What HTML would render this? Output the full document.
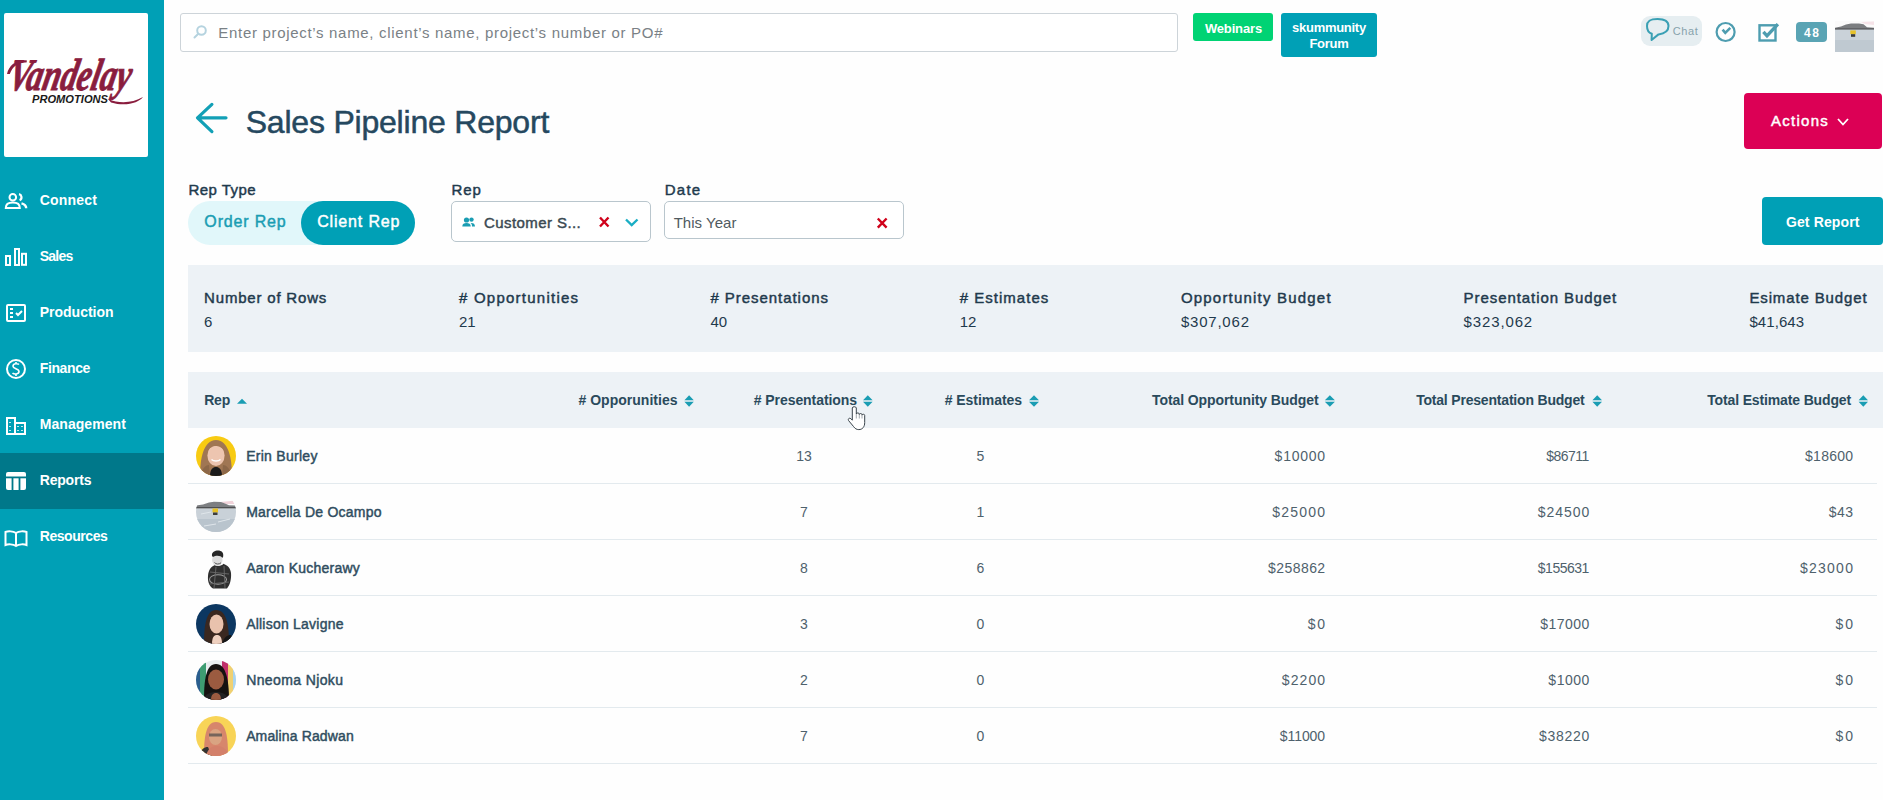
<!DOCTYPE html>
<html><head><meta charset="utf-8"><title>Sales Pipeline Report</title>
<style>
html,body{margin:0;padding:0;width:1883px;height:800px;overflow:hidden;background:#fefefe;font-family:"Liberation Sans", sans-serif;}
.t{position:absolute;white-space:nowrap;}
.a{position:absolute;}
</style></head><body>
<!-- sidebar -->
<div class="a" style="left:0;top:0;width:164px;height:800px;background:#00a0b6;"></div>
<div class="a" style="left:4px;top:13px;width:144px;height:144px;background:#ffffff;border-radius:2px;"></div>
<svg class="a" style="left:4px;top:13px" width="144" height="144" viewBox="0 0 144 144">
  <g transform="skewX(-12)">
  <text x="19" y="77" font-family="Liberation Serif" font-style="italic" font-weight="bold" font-size="45" fill="#8a1d3e" stroke="#8a1d3e" stroke-width="1.0" textLength="122" lengthAdjust="spacingAndGlyphs">Vandelay</text>
  </g>
  <path d="M3 61 C5 52 13 46 23 47.5 L22.5 49.5 C15 49 8.5 53 5.8 61 Z" fill="#8a1d3e"/>
  <path d="M104 86 C116 91 128 90 139 84 C135 89.5 122 94 107 89.5 Z" fill="#8a1d3e"/>
  <text x="28" y="90" font-family="Liberation Sans" font-style="italic" font-weight="bold" font-size="11" fill="#1a1a1a" textLength="76" lengthAdjust="spacingAndGlyphs">PROMOTIONS</text>
</svg>
<div class="a" style="left:0;top:453px;width:164px;height:56px;background:#00788a;"></div>
<!-- nav icons -->
<svg class="a" style="left:0;top:180px" width="40" height="380" viewBox="0 180 40 380" fill="none" stroke="#fff" stroke-width="2">
  <!-- connect -->
  <circle cx="12.8" cy="197.3" r="3.3"/>
  <path d="M5.8 208 C5.8 204 8.5 202.6 12.8 202.6 C17 202.6 19.8 204 19.8 208 Z"/>
  <path d="M19 194.2 C21.8 194.8 22.6 199 19.6 200.2" stroke-width="2.2"/>
  <path d="M21.5 203.3 C25 204.2 26.2 206 26.2 208.2" stroke-width="2.4"/>
  <!-- sales -->
  <rect x="6" y="256" width="4" height="9" />
  <rect x="15" y="249" width="4" height="16" />
  <rect x="22" y="253.8" width="4" height="11" />
  <!-- production -->
  <rect x="7" y="305" width="18" height="16" rx="1"/>
  <path d="M10 309 h3 M10 313 h3 M10 317 h3" />
  <path d="M16 313 l2 2 l4 -4" />
  <!-- finance -->
  <circle cx="16" cy="369" r="9"/>
  <path d="M19 364.5 C18 363.5 13 363 13 366.3 C13 369 19 368.5 19 371.5 C19 374.5 14 374.5 12.5 373 M16 362 v2 M16 374 v2" stroke-width="1.6"/>
  <!-- management -->
  <rect x="7" y="418" width="8" height="16"/>
  <rect x="15" y="423" width="10" height="11"/>
  <path d="M10 422 v1 M10 426 v1 M10 430 v1 M18 426 v1 M22 426 v1 M18 430 v1 M22 430 v1" stroke-width="1.5"/>
  <!-- reports -->
  <rect x="6" y="472" width="20" height="18" rx="2" fill="#fff" stroke="none"/>
  <rect x="6" y="476.5" width="20" height="1.8" fill="#00788a" stroke="none"/>
  <rect x="11.6" y="478" width="1.8" height="12" fill="#00788a" stroke="none"/>
  <rect x="18.6" y="478" width="1.8" height="12" fill="#00788a" stroke="none"/>
  <!-- resources -->
  <path d="M16 533 C13 531 8 531 5.5 532 V545 C8 544 13 544 16 546 C19 544 24 544 26.5 545 V532 C24 531 19 531 16 533 Z M16 533 V546"/>
</svg>
<!-- search -->
<div class="a" style="left:180px;top:13px;width:996px;height:37px;border:1px solid #cdd4d9;border-radius:3px;background:#fff;"></div>
<svg class="a" style="left:190px;top:22px" width="22" height="20" viewBox="0 0 22 20" fill="none" stroke="#b5d3df" stroke-width="2">
  <circle cx="11.5" cy="8.5" r="4.3"/>
  <path d="M8.3 11.8 L4.5 15.5" stroke-linecap="round"/>
</svg>
<div class="a" style="left:1193px;top:13px;width:80px;height:28px;background:#00d374;border-radius:3px;"></div>
<div class="a" style="left:1281px;top:13px;width:96px;height:44px;background:#00a0b6;border-radius:3px;"></div>
<!-- chat -->
<div class="a" style="left:1641px;top:16px;width:61px;height:30px;background:#e6eef1;border-radius:9px;"></div>
<svg class="a" style="left:1640px;top:14px" width="34" height="32" viewBox="0 0 34 32" fill="none" stroke="#3aa0b4" stroke-width="2">
  <path d="M11.8 19.8 C8.2 18.6 7 16 7 12 C7 7 10 5 17.5 5 C25 5 28.5 7 28.5 12 C28.5 17 25 19.6 18.5 20.4 L11.6 26 L11.8 19.8 Z" stroke-linejoin="round"/>
</svg>
<svg class="a" style="left:1713px;top:19px" width="26" height="26" viewBox="0 0 26 26" fill="none" stroke="#4e9db0" stroke-width="2.2">
  <circle cx="12.6" cy="13" r="9"/>
  <path d="M9.6 10.6 L12.3 13.9 L17.3 8.9" stroke-width="2.6"/>
</svg>
<svg class="a" style="left:1755px;top:20px" width="26" height="24" viewBox="0 0 26 24" fill="none" stroke="#4e9db0">
  <rect x="4.5" y="5.3" width="16" height="15.2" stroke-width="2.4"/>
  <path d="M8.4 11.9 L12 15.8 L22.9 4.1" stroke-width="3.4"/>
</svg>
<div class="a" style="left:1796px;top:22px;width:31px;height:20px;background:#5aa4b4;border-radius:4px;"></div>
<!-- profile photo -->
<svg class="a" style="left:1835px;top:20.5px" width="39" height="31.5" viewBox="0 0 39 31.5">
  <rect x="0" y="0" width="39" height="31.5" fill="#c9d1d8"/>
  <rect x="0" y="0" width="39" height="8" fill="#fbfafa"/>
  <path d="M26 1 L39 0.5 L39 4 L30 3 Z" fill="#f6e3e8"/>
  <path d="M0 6.7 L6 5.6 L11 3.6 L16 2.6 L24 2.5 L28.5 3.2 L32 6.2 L39 6.8 L39 8.6 L0 8.6 Z" fill="#7b7d80"/>
  <rect x="0" y="7.4" width="39" height="1.3" fill="#505254"/>
  <rect x="0" y="8.7" width="39" height="22.8" fill="#cad2d9"/>
  <rect x="0" y="19" width="39" height="12.5" fill="#bfc9d1"/>
  <rect x="15.3" y="9.4" width="5.5" height="3.8" fill="#e7c22a"/>
  <rect x="16" y="13.2" width="4.2" height="2.6" fill="#3a3a3a"/>
</svg>
<!-- title arrow -->
<svg class="a" style="left:190px;top:98px" width="44" height="40" viewBox="0 0 44 40" fill="none" stroke="#12a0b6" stroke-width="3.2" stroke-linecap="round" stroke-linejoin="round">
  <path d="M21.9 6.4 L7.5 19.8 L21.9 33.6 M7.5 19.8 H36"/>
</svg>
<!-- actions -->
<div class="a" style="left:1744px;top:93px;width:138px;height:56px;background:#dc0055;border-radius:4px;"></div>
<svg class="a" style="left:1834px;top:114px" width="18" height="16" viewBox="0 0 18 16" fill="none" stroke="#fff" stroke-width="1.8">
  <path d="M4 5 L9 10.5 L14 5"/>
</svg>
<!-- rep type toggle -->
<div class="a" style="left:188px;top:201px;width:227px;height:44px;background:#e1f7fa;border-radius:22px;"></div>
<div class="a" style="left:301px;top:201px;width:114px;height:44px;background:#00a0b6;border-radius:22px;"></div>
<!-- rep select -->
<div class="a" style="left:451px;top:201px;width:198px;height:39px;border:1px solid #b9c6cd;border-radius:5px;background:#fff;"></div>
<svg class="a" style="left:460px;top:214px" width="18" height="16" viewBox="0 0 18 16" fill="#1a9db3">
  <circle cx="6.5" cy="6" r="2.6"/>
  <circle cx="11.5" cy="5.6" r="2.2"/>
  <path d="M2.3 12.5 C2.3 9.8 4 9 6.5 9 C9 9 10.7 9.8 10.7 12.5 Z"/>
  <path d="M10.5 9 C13 8.6 15 9.5 15 12.5 L12 12.5 C12 10.8 11.5 9.7 10.5 9 Z"/>
</svg>
<svg class="a" style="left:596px;top:214px" width="16" height="16" viewBox="0 0 16 16" fill="none" stroke="#d0021b" stroke-width="2.4">
  <path d="M4 3.5 L12.5 12.5 M12.5 3.5 L4 12.5"/>
</svg>
<svg class="a" style="left:622px;top:214px" width="18" height="16" viewBox="0 0 18 16" fill="none" stroke="#1aaec4" stroke-width="2.4">
  <path d="M4 5.5 L9.7 11 L15.5 5.5"/>
</svg>
<!-- date -->
<div class="a" style="left:664px;top:201px;width:238px;height:36px;border:1px solid #b9c6cd;border-radius:5px;background:#fff;"></div>
<svg class="a" style="left:874px;top:215px" width="16" height="16" viewBox="0 0 16 16" fill="none" stroke="#d0021b" stroke-width="2.4">
  <path d="M3.8 3.5 L12.6 12.6 M12.6 3.5 L3.8 12.6"/>
</svg>
<!-- get report -->
<div class="a" style="left:1762px;top:197px;width:121px;height:48px;background:#00a0b6;border-radius:4px;"></div>
<!-- stats -->
<div class="a" style="left:188px;top:265px;width:1695px;height:87px;background:#edf2f6;"></div>
<!-- table header -->
<div class="a" style="left:188px;top:372px;width:1695px;height:56px;background:#edf2f6;"></div>
<svg class="a" style="left:0;top:390px" width="1883" height="20" viewBox="0 390 1883 20" fill="#1a9db3">
  <path d="M237 403.8 L242 398.7 L247 403.8 Z"/>
  <path d="M684.4 400.2 L689.1 395.2 L693.8 400.2 Z M684.4 401.7 L689.1 406.7 L693.8 401.7 Z"/>
  <path d="M863 400.2 L867.8 395.2 L872.6 400.2 Z M863 401.7 L867.8 406.7 L872.6 401.7 Z"/>
  <path d="M1029 400.2 L1034 395.2 L1039 400.2 Z M1029 401.7 L1034 406.7 L1039 401.7 Z"/>
  <path d="M1324.8 400.2 L1329.85 395.2 L1334.9 400.2 Z M1324.8 401.7 L1329.85 406.7 L1334.9 401.7 Z"/>
  <path d="M1592.4 400.2 L1597.2 395.2 L1602 400.2 Z M1592.4 401.7 L1597.2 406.7 L1602 401.7 Z"/>
  <path d="M1858.6 400.2 L1863.3 395.2 L1868 400.2 Z M1858.6 401.7 L1863.3 406.7 L1868 401.7 Z"/>
</svg>
<!-- row borders -->
<div class="a" style="left:188px;top:483px;width:1689px;height:1px;background:#e3eaee;"></div>
<div class="a" style="left:188px;top:539px;width:1689px;height:1px;background:#e3eaee;"></div>
<div class="a" style="left:188px;top:595px;width:1689px;height:1px;background:#e3eaee;"></div>
<div class="a" style="left:188px;top:651px;width:1689px;height:1px;background:#e3eaee;"></div>
<div class="a" style="left:188px;top:707px;width:1689px;height:1px;background:#e3eaee;"></div>
<div class="a" style="left:188px;top:763px;width:1689px;height:1px;background:#e3eaee;"></div>
<!-- avatars -->
<svg class="a" style="left:196px;top:436px" width="40" height="40" viewBox="0 0 40 40">
  <defs><clipPath id="c1"><circle cx="20" cy="20" r="20"/></clipPath></defs>
  <g clip-path="url(#c1)">
    <rect width="40" height="40" fill="#f8cb12"/>
    <path d="M4 40 C4 24 7 4 20 4 C33 4 36 24 36 40 Z" fill="#a07653"/>
    <ellipse cx="20" cy="19.5" rx="8.6" ry="10.5" fill="#edc5b0"/>
    <path d="M11.5 15 C12 9 16 7 20 7 C25 7 28 9.5 28.5 15 C26 11 22 10 20 10 C17 10 13 12 11.5 15 Z" fill="#a07653"/>
    <path d="M14 40 C14 33 17 31 20 31 C23 31 26 33 26 40 Z" fill="#1b1b1b"/>
    <path d="M4 40 C6 33 9 29 13 29 L14 40 Z M36 40 C34 33 31 29 27 29 L26 40 Z" fill="#8c6748"/>
    <path d="M15.5 23.5 C17.5 25.5 22.5 25.5 24.5 23.5" stroke="#ffffff" stroke-width="1.3" fill="none"/>
  </g>
</svg>
<svg class="a" style="left:196px;top:492px" width="40" height="40" viewBox="0 0 40 40">
  <defs><clipPath id="c2"><circle cx="20" cy="20" r="20"/></clipPath></defs>
  <g clip-path="url(#c2)">
    <rect width="40" height="40" fill="#fefefe"/>
    <path d="M24 10 L40 8.5 L40 12 L30 12 Z" fill="#f1d3da"/>
    <path d="M0 13.5 L7 12.5 L13 10.5 L18 9.8 L25 10 L29 11.5 L33 13.2 L40 13.5 L40 16.5 L0 16.5 Z" fill="#7d7f82"/>
    <rect x="0" y="15" width="40" height="1.6" fill="#4e5052"/>
    <rect x="0" y="16.5" width="40" height="24" fill="#c9d1d8"/>
    <rect x="0" y="27" width="40" height="13" fill="#b9c4cd"/>
    <path d="M5 22 L15 20 M22 30 L34 27 M8 34 L20 32" stroke="#dfe5ea" stroke-width="1"/>
    <rect x="16.5" y="16.5" width="5.5" height="4" fill="#e6c025"/>
    <rect x="17" y="20.5" width="4.5" height="2.5" fill="#3d3d3d"/>
  </g>
</svg>
<svg class="a" style="left:196px;top:548px" width="40" height="42" viewBox="0 0 40 42">
  <path d="M19 17 C15 18.5 12.5 22 12 28 C11.5 33 13 38 17 40.5 L31 40.5 C34 37 35.5 31 35 25 C34.5 20 31.5 17.5 27.5 15.8 C25.5 18 22 18.6 19 17 Z" fill="#2f2f2f"/>
  <ellipse cx="21.3" cy="12" rx="5.2" ry="6" fill="#dcdcdc"/>
  <path d="M16 8 C15.5 4 19 2.6 22 2.6 C25.5 2.7 27.8 4.5 27.2 8.5 L26.3 10 C25.3 7.5 20 6.8 17 9 Z" fill="#262626"/>
  <path d="M18.5 14.5 C20 16.5 23 16.5 25 14.8" stroke="#555" stroke-width="1" fill="none"/>
  <ellipse cx="22" cy="31.5" rx="8.5" ry="4.8" fill="none" stroke="#9d9d9d" stroke-width="1.1"/>
  <path d="M14 24 L33 26 M13.5 36 L33 34 M20 19 L18 40 M28 18 L29 40" stroke="#6a6a6a" stroke-width="0.9" fill="none"/>
</svg>
<svg class="a" style="left:196px;top:604px" width="40" height="40" viewBox="0 0 40 40">
  <defs><clipPath id="c4"><circle cx="20" cy="20" r="20"/></clipPath></defs>
  <g clip-path="url(#c4)">
    <rect width="40" height="40" fill="#0c3761"/>
    <path d="M8 40 C8 22 10 6 20 6 C31 6 33 22 33 40 Z" fill="#3a2820"/>
    <ellipse cx="20.5" cy="20" rx="7" ry="9.5" fill="#e9c2ad"/>
    <path d="M16 40 C16 33 18 31 21 31 C24 31 26 33 26 40 Z" fill="#efd0bf"/>
    <path d="M26 40 C28 33 31 31 35 31 L40 40 Z" fill="#161616"/>
  </g>
</svg>
<svg class="a" style="left:196px;top:660px" width="40" height="40" viewBox="0 0 40 40">
  <defs><clipPath id="c5"><circle cx="20" cy="20" r="20"/></clipPath></defs>
  <g clip-path="url(#c5)">
    <rect width="40" height="40" fill="#e9eef0"/>
    <rect x="0" y="0" width="4" height="40" fill="#2a5e8e"/>
    <rect x="4" y="0" width="6" height="40" fill="#3e9d72"/>
    <rect x="26" y="0" width="6" height="40" fill="#c0306a"/>
    <rect x="32" y="0" width="5" height="40" fill="#f0d070"/>
    <rect x="37" y="0" width="3" height="40" fill="#a9d4ef"/>
    <path d="M8 40 C8 20 10 4 20 4 C30 4 33 20 33 40 Z" fill="#151210"/>
    <ellipse cx="20" cy="19.5" rx="8" ry="10" fill="#9b5b40"/>
    <path d="M7 40 C9 34 14 32 20 32 C26 32 31 34 33 40 Z" fill="#222"/>
    <path d="M15 40 C15 35 17 33 20 33 C23 33 25 35 25 40 Z" fill="#9b5b40"/>
  </g>
</svg>
<svg class="a" style="left:196px;top:716px" width="40" height="40" viewBox="0 0 40 40">
  <defs><clipPath id="c6"><circle cx="20" cy="20" r="20"/></clipPath></defs>
  <g clip-path="url(#c6)">
    <rect width="40" height="40" fill="#f8d457"/>
    <path d="M8 40 C8 24 9 6 20 6 C31 6 32 24 32 40 Z" fill="#d7866c"/>
    <ellipse cx="19.5" cy="21" rx="6.5" ry="8" fill="#d9a482"/>
    <rect x="13" y="17.5" width="13" height="3" fill="#4a4a4a" opacity="0.7"/>
    <path d="M3 40 C5 33 8 31 12 31 L16 40 Z" fill="#333"/>
    <path d="M10 40 C12 32 16 30 21 30 C27 30 31 33 33 40 Z" fill="#d3806a"/>
  </g>
</svg>
<!-- cursor -->
<svg class="a" style="left:846px;top:402px" width="24" height="30" viewBox="0 0 24 30">
  <path d="M6.3 6 C6.3 4.3 10.3 4.3 10.3 6 L10.3 12 C10.3 10.6 13.3 10.6 13.3 12 L13.3 12.6 C13.3 11.2 16 11.2 16 12.6 L16 13.2 C16 11.9 18.7 11.9 18.7 13.4 L18.7 20.5 C18.7 24.8 16.5 27.6 12.8 27.6 C10.6 27.6 9 26.6 7.6 24.6 L2.6 18.6 C1.6 17.2 3.2 15.4 4.8 16.6 L6.3 18.2 Z" fill="#fff" stroke="#39434a" stroke-width="1"/>
  <path d="M10.3 12 V16.5 M13.3 12.6 V16.5 M16 13.2 V16.5" stroke="#8a9399" stroke-width="0.8"/>
</svg>

<div class="t" style="left:39.74px;top:192.90px;font-size:14px;line-height:14px;font-weight:700;color:#ffffff;letter-spacing:0.187px;">Connect</div><div class="t" style="left:39.74px;top:249.15px;font-size:14px;line-height:14px;font-weight:700;color:#ffffff;letter-spacing:-0.743px;">Sales</div><div class="t" style="left:39.74px;top:305.15px;font-size:14px;line-height:14px;font-weight:700;color:#ffffff;">Production</div><div class="t" style="left:39.74px;top:361.15px;font-size:14px;line-height:14px;font-weight:700;color:#ffffff;letter-spacing:-0.381px;">Finance</div><div class="t" style="left:39.74px;top:417.15px;font-size:14px;line-height:14px;font-weight:700;color:#ffffff;letter-spacing:0.060px;">Management</div><div class="t" style="left:39.74px;top:473.15px;font-size:14px;line-height:14px;font-weight:700;color:#ffffff;letter-spacing:-0.198px;">Reports</div><div class="t" style="left:39.74px;top:529.15px;font-size:14px;line-height:14px;font-weight:700;color:#ffffff;letter-spacing:-0.434px;">Resources</div><div class="t" style="left:218.30px;top:25.20px;font-size:15px;line-height:15px;font-weight:400;color:#7a8186;letter-spacing:0.689px;">Enter project’s name, client’s name, project’s number or PO#</div><div class="t" style="left:1204.88px;top:21.50px;font-size:13px;line-height:13px;font-weight:700;color:#ffffff;letter-spacing:-0.149px;">Webinars</div><div class="t" style="left:1292.08px;top:20.90px;font-size:13px;line-height:13px;font-weight:700;color:#ffffff;letter-spacing:-0.282px;">skummunity</div><div class="t" style="left:1309.48px;top:37.00px;font-size:13px;line-height:13px;font-weight:700;color:#ffffff;letter-spacing:-0.303px;">Forum</div><div class="t" style="left:1672.76px;top:25.59px;font-size:11px;line-height:11px;font-weight:400;color:#87a2ac;letter-spacing:0.610px;">Chat</div><div class="t" style="left:1803.92px;top:26.64px;font-size:12px;line-height:12px;font-weight:700;color:#ffffff;letter-spacing:1.701px;">48</div><div class="t" style="left:245.72px;top:106.31px;font-size:32px;line-height:32px;font-weight:400;color:#25485f;letter-spacing:-0.209px;-webkit-text-stroke:0.5px #25485f;">Sales Pipeline Report</div><div class="t" style="left:1770.90px;top:113.10px;font-size:15px;line-height:15px;font-weight:400;color:#ffffff;-webkit-text-stroke:0.45px #ffffff;letter-spacing:1.299px;">Actions</div><div class="t" style="left:188.40px;top:181.80px;font-size:15px;line-height:15px;font-weight:400;color:#1f3a4d;-webkit-text-stroke:0.45px #1f3a4d;letter-spacing:0.466px;">Rep Type</div><div class="t" style="left:451.40px;top:182.30px;font-size:15px;line-height:15px;font-weight:400;color:#1f3a4d;-webkit-text-stroke:0.45px #1f3a4d;letter-spacing:0.984px;">Rep</div><div class="t" style="left:664.80px;top:182.30px;font-size:15px;line-height:15px;font-weight:400;color:#1f3a4d;-webkit-text-stroke:0.45px #1f3a4d;letter-spacing:1.204px;">Date</div><div class="t" style="left:204.36px;top:214.46px;font-size:16px;line-height:16px;font-weight:400;color:#1a9db3;-webkit-text-stroke:0.45px #1a9db3;letter-spacing:0.822px;">Order Rep</div><div class="t" style="left:317.16px;top:214.46px;font-size:16px;line-height:16px;font-weight:400;color:#ffffff;-webkit-text-stroke:0.45px #ffffff;letter-spacing:0.842px;">Client Rep</div><div class="t" style="left:484.00px;top:214.70px;font-size:15px;line-height:15px;font-weight:400;color:#3b4a52;-webkit-text-stroke:0.45px #3b4a52;letter-spacing:0.425px;">Customer S...</div><div class="t" style="left:673.70px;top:214.50px;font-size:15px;line-height:15px;font-weight:400;color:#4f5a60;letter-spacing:0.019px;">This Year</div><div class="t" style="left:1785.94px;top:214.55px;font-size:14px;line-height:14px;font-weight:700;color:#ffffff;letter-spacing:0.120px;">Get Report</div><div class="t" style="left:204.10px;top:290.10px;font-size:15px;line-height:15px;font-weight:400;color:#1f3a4d;-webkit-text-stroke:0.45px #1f3a4d;letter-spacing:0.807px;">Number of Rows</div><div class="t" style="left:204.10px;top:313.70px;font-size:15px;line-height:15px;font-weight:400;color:#1f3a4d;">6</div><div class="t" style="left:458.90px;top:290.10px;font-size:15px;line-height:15px;font-weight:400;color:#1f3a4d;-webkit-text-stroke:0.45px #1f3a4d;letter-spacing:1.248px;"># Opportunities</div><div class="t" style="left:458.90px;top:313.70px;font-size:15px;line-height:15px;font-weight:400;color:#1f3a4d;">21</div><div class="t" style="left:710.40px;top:290.10px;font-size:15px;line-height:15px;font-weight:400;color:#1f3a4d;-webkit-text-stroke:0.45px #1f3a4d;letter-spacing:0.955px;"># Presentations</div><div class="t" style="left:710.40px;top:313.70px;font-size:15px;line-height:15px;font-weight:400;color:#1f3a4d;">40</div><div class="t" style="left:959.70px;top:290.10px;font-size:15px;line-height:15px;font-weight:400;color:#1f3a4d;-webkit-text-stroke:0.45px #1f3a4d;letter-spacing:1.023px;"># Estimates</div><div class="t" style="left:959.70px;top:313.70px;font-size:15px;line-height:15px;font-weight:400;color:#1f3a4d;">12</div><div class="t" style="left:1180.90px;top:290.10px;font-size:15px;line-height:15px;font-weight:400;color:#1f3a4d;-webkit-text-stroke:0.45px #1f3a4d;letter-spacing:1.202px;">Opportunity Budget</div><div class="t" style="left:1180.90px;top:313.70px;font-size:15px;line-height:15px;font-weight:400;color:#1f3a4d;letter-spacing:0.789px;">$307,062</div><div class="t" style="left:1463.60px;top:290.10px;font-size:15px;line-height:15px;font-weight:400;color:#1f3a4d;-webkit-text-stroke:0.45px #1f3a4d;letter-spacing:0.926px;">Presentation Budget</div><div class="t" style="left:1463.60px;top:313.70px;font-size:15px;line-height:15px;font-weight:400;color:#1f3a4d;letter-spacing:0.860px;">$323,062</div><div class="t" style="left:1749.40px;top:290.10px;font-size:15px;line-height:15px;font-weight:400;color:#1f3a4d;-webkit-text-stroke:0.45px #1f3a4d;letter-spacing:0.869px;">Esimate Budget</div><div class="t" style="left:1749.40px;top:313.70px;font-size:15px;line-height:15px;font-weight:400;color:#1f3a4d;letter-spacing:0.078px;">$41,643</div><div class="t" style="left:204.14px;top:393.15px;font-size:14px;line-height:14px;font-weight:700;color:#2a4a5c;letter-spacing:-0.117px;">Rep</div><div class="t" style="left:578.44px;top:393.15px;font-size:14px;line-height:14px;font-weight:700;color:#2a4a5c;letter-spacing:0.025px;"># Opporunities</div><div class="t" style="left:753.84px;top:393.15px;font-size:14px;line-height:14px;font-weight:700;color:#2a4a5c;letter-spacing:-0.075px;"># Presentations</div><div class="t" style="left:944.64px;top:393.15px;font-size:14px;line-height:14px;font-weight:700;color:#2a4a5c;letter-spacing:-0.041px;"># Estimates</div><div class="t" style="left:1152.04px;top:393.15px;font-size:14px;line-height:14px;font-weight:700;color:#2a4a5c;letter-spacing:-0.086px;">Total Opportunity Budget</div><div class="t" style="left:1416.14px;top:393.15px;font-size:14px;line-height:14px;font-weight:700;color:#2a4a5c;letter-spacing:-0.191px;">Total Presentation Budget</div><div class="t" style="left:1707.24px;top:393.15px;font-size:14px;line-height:14px;font-weight:700;color:#2a4a5c;letter-spacing:-0.142px;">Total Estimate Budget</div><div class="t" style="left:246.14px;top:449.15px;font-size:14px;line-height:14px;font-weight:400;color:#2f4d60;-webkit-text-stroke:0.45px #2f4d60;letter-spacing:0.285px;">Erin Burley</div><div class="t" style="left:796.21px;top:449.15px;font-size:14px;line-height:14px;font-weight:400;color:#4e616c;">13</div><div class="t" style="left:976.60px;top:449.15px;font-size:14px;line-height:14px;font-weight:400;color:#4e616c;">5</div><div class="t" style="left:1274.60px;top:449.15px;font-size:14px;line-height:14px;font-weight:400;color:#4e616c;letter-spacing:0.768px;">$10000</div><div class="t" style="left:1546.17px;top:449.15px;font-size:14px;line-height:14px;font-weight:400;color:#4e616c;letter-spacing:-0.500px;">$86711</div><div class="t" style="left:1805.12px;top:449.15px;font-size:14px;line-height:14px;font-weight:400;color:#4e616c;letter-spacing:0.224px;">$18600</div><div class="t" style="left:246.14px;top:505.15px;font-size:14px;line-height:14px;font-weight:400;color:#2f4d60;-webkit-text-stroke:0.45px #2f4d60;letter-spacing:0.231px;">Marcella De Ocampo</div><div class="t" style="left:800.10px;top:505.15px;font-size:14px;line-height:14px;font-weight:400;color:#4e616c;">7</div><div class="t" style="left:976.60px;top:505.15px;font-size:14px;line-height:14px;font-weight:400;color:#4e616c;">1</div><div class="t" style="left:1272.16px;top:505.15px;font-size:14px;line-height:14px;font-weight:400;color:#4e616c;letter-spacing:1.256px;">$25000</div><div class="t" style="left:1537.72px;top:505.15px;font-size:14px;line-height:14px;font-weight:400;color:#4e616c;letter-spacing:0.984px;">$24500</div><div class="t" style="left:1828.64px;top:505.15px;font-size:14px;line-height:14px;font-weight:400;color:#4e616c;letter-spacing:0.480px;">$43</div><div class="t" style="left:246.14px;top:561.15px;font-size:14px;line-height:14px;font-weight:400;color:#2f4d60;-webkit-text-stroke:0.45px #2f4d60;letter-spacing:0.222px;">Aaron Kucherawy</div><div class="t" style="left:800.10px;top:561.15px;font-size:14px;line-height:14px;font-weight:400;color:#4e616c;">8</div><div class="t" style="left:976.60px;top:561.15px;font-size:14px;line-height:14px;font-weight:400;color:#4e616c;">6</div><div class="t" style="left:1268.04px;top:561.15px;font-size:14px;line-height:14px;font-weight:400;color:#4e616c;letter-spacing:0.434px;">$258862</div><div class="t" style="left:1537.84px;top:561.15px;font-size:14px;line-height:14px;font-weight:400;color:#4e616c;letter-spacing:-0.500px;">$155631</div><div class="t" style="left:1799.96px;top:561.15px;font-size:14px;line-height:14px;font-weight:400;color:#4e616c;letter-spacing:1.256px;">$23000</div><div class="t" style="left:246.14px;top:617.15px;font-size:14px;line-height:14px;font-weight:400;color:#2f4d60;-webkit-text-stroke:0.45px #2f4d60;letter-spacing:0.225px;">Allison Lavigne</div><div class="t" style="left:800.10px;top:617.15px;font-size:14px;line-height:14px;font-weight:400;color:#4e616c;">3</div><div class="t" style="left:976.60px;top:617.15px;font-size:14px;line-height:14px;font-weight:400;color:#4e616c;">0</div><div class="t" style="left:1307.68px;top:617.15px;font-size:14px;line-height:14px;font-weight:400;color:#4e616c;letter-spacing:1.902px;">$0</div><div class="t" style="left:1540.16px;top:617.15px;font-size:14px;line-height:14px;font-weight:400;color:#4e616c;letter-spacing:0.496px;">$17000</div><div class="t" style="left:1835.48px;top:617.15px;font-size:14px;line-height:14px;font-weight:400;color:#4e616c;letter-spacing:1.902px;">$0</div><div class="t" style="left:246.14px;top:673.15px;font-size:14px;line-height:14px;font-weight:400;color:#2f4d60;-webkit-text-stroke:0.45px #2f4d60;letter-spacing:0.392px;">Nneoma Njoku</div><div class="t" style="left:800.10px;top:673.15px;font-size:14px;line-height:14px;font-weight:400;color:#4e616c;">2</div><div class="t" style="left:976.60px;top:673.15px;font-size:14px;line-height:14px;font-weight:400;color:#4e616c;">0</div><div class="t" style="left:1281.72px;top:673.15px;font-size:14px;line-height:14px;font-weight:400;color:#4e616c;letter-spacing:1.126px;">$2200</div><div class="t" style="left:1548.36px;top:673.15px;font-size:14px;line-height:14px;font-weight:400;color:#4e616c;letter-spacing:0.516px;">$1000</div><div class="t" style="left:1835.48px;top:673.15px;font-size:14px;line-height:14px;font-weight:400;color:#4e616c;letter-spacing:1.902px;">$0</div><div class="t" style="left:246.14px;top:729.15px;font-size:14px;line-height:14px;font-weight:400;color:#2f4d60;-webkit-text-stroke:0.45px #2f4d60;letter-spacing:0.137px;">Amalina Radwan</div><div class="t" style="left:800.10px;top:729.15px;font-size:14px;line-height:14px;font-weight:400;color:#4e616c;">7</div><div class="t" style="left:976.60px;top:729.15px;font-size:14px;line-height:14px;font-weight:400;color:#4e616c;">0</div><div class="t" style="left:1279.76px;top:729.15px;font-size:14px;line-height:14px;font-weight:400;color:#4e616c;letter-spacing:-0.058px;">$11000</div><div class="t" style="left:1539.08px;top:729.15px;font-size:14px;line-height:14px;font-weight:400;color:#4e616c;letter-spacing:0.712px;">$38220</div><div class="t" style="left:1835.48px;top:729.15px;font-size:14px;line-height:14px;font-weight:400;color:#4e616c;letter-spacing:1.902px;">$0</div>
</body></html>
